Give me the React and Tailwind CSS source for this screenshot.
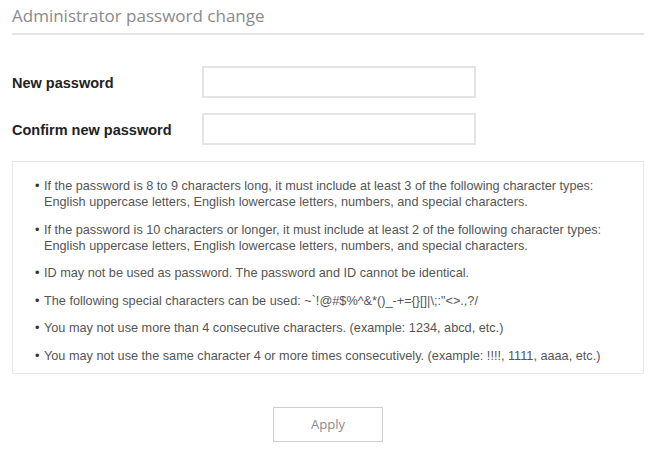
import React from 'react';

const rules = [
    'If the password is 8 to 9 characters long, it must include at least 3 of the following character types: English uppercase letters, English lowercase letters, numbers, and special characters.',
    'If the password is 10 characters or longer, it must include at least 2 of the following character types: English uppercase letters, English lowercase letters, numbers, and special characters.',
    'ID may not be used as password. The password and ID cannot be identical.',
    'The following special characters can be used: ~`!@#$%^&*()_-+={}[]|\\;:"<>.,?/',
    'You may not use more than 4 consecutive characters. (example: 1234, abcd, etc.)',
    'You may not use the same character 4 or more times consecutively. (example: !!!!, 1111, aaaa, etc.)',
];

const FieldRow = ({ label, className = '' }) => (
    <div className={`flex items-center ${className}`}>
        <label className="w-[190px] pt-[3px] text-[14.5px] font-bold text-[#222]">{label}</label>
        <input
            type="password"
            className="w-[274px] h-[32px] border-2 border-[#e4e4e4] bg-white outline-none"
        />
    </div>
);

export default function App() {
    return (
        <div
            className="w-[650px] h-[450px] bg-white pl-3 pr-[6px] pt-[4px]"
            style={{ fontFamily: '"Liberation Sans", Arial, sans-serif' }}
        >
            <h1
                className="text-[17px] leading-[23px] text-[#8a8a8a]"
                style={{ fontFamily: '"Open Sans", sans-serif' }}
            >
                Administrator password change
            </h1>
            <div className="mt-[6px] h-[2px] bg-[#e3e3e3]"></div>

            <FieldRow label="New password" className="mt-[31px]" />
            <FieldRow label="Confirm new password" className="mt-[15px]" />

            <div className="mt-[16px] h-[213px] border border-[#e8e8e8] pl-[22px] pr-[28px] pt-[16px]">
                <ul className="text-[12.7px] leading-[16px] text-[#555] space-y-[11.5px]">
                    {rules.map((rule, i) => (
                        <li key={i} className="flex">
                            <span className="w-[9px] shrink-0 text-[#333]">•</span>
                            <span>{rule}</span>
                        </li>
                    ))}
                </ul>
            </div>

            <div className="flex justify-center mt-[33px]">
                <button
                    className="w-[110px] h-[35px] border border-[#cfcfcf] bg-white text-[13px] text-[#8a8a8a]"
                    style={{ fontFamily: '"Open Sans", sans-serif' }}
                >
                    Apply
                </button>
            </div>
        </div>
    );
}
